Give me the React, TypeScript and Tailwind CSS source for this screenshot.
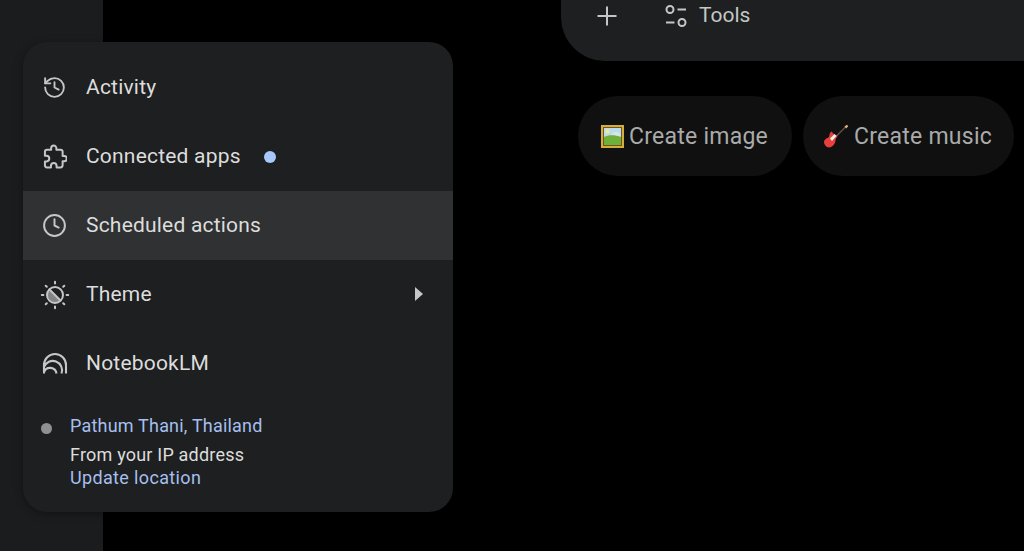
import { Clock, History, Plus } from 'lucide-react'
import type { ReactNode } from 'react'

const font = "font-['Roboto','Noto_Sans',sans-serif]"

function PuzzleIcon() {
  return (
    <svg width="25" height="25" viewBox="-0.8 -0.5 24 24" fill="none" stroke="currentColor" strokeWidth="1.9" strokeLinejoin="round">
      <path d="M20.500 11H19V7c0-1.100-.9-2-2-2h-4V3.500a2.500 2.500 0 0 0-5 0V5H4c-1.100 0-2 .9-2 2v3.800h1.500c1.500 0 2.700 1.200 2.700 2.700S5 16.200 3.500 16.200H2V20c0 1.100.9 2 2 2h3.800v-1.500c0-1.500 1.200-2.700 2.700-2.700s2.700 1.200 2.700 2.700V22H17c1.100 0 2-.9 2-2v-4h1.500a2.500 2.500 0 0 0 0-5z" />
    </svg>
  )
}

function ThemeIcon() {
  return (
    <svg width="30" height="30" viewBox="0 0 30 30" fill="none" stroke="currentColor" strokeWidth="2" strokeLinecap="round">
      <circle cx="15" cy="15" r="8" />
      <path d="M9.500 9.500A7.800 7.800 0 0 0 20.500 20.500z" fill="currentColor" stroke="none" opacity="0.6" />
      <path d="M9.500 9.500l11 11" />
      <path d="M15 1.800v1.600M15 26.600v1.600M1.800 15h1.600M26.600 15h1.600M5.700 5.700l1.100 1.100M23.200 23.200l1.100 1.100M5.700 24.300l1.100-1.100M23.200 6.800l1.100-1.100" />
    </svg>
  )
}

function NotebookIcon() {
  return (
    <svg width="26" height="26" viewBox="0 0 26 26" fill="none" stroke="currentColor" strokeWidth="2.1">
      <path d="M2 22.500V14a11 11 0 0 1 22 0v8.500" />
      <path d="M2 16A9 9 0 0 1 19.500 22.500" />
      <path d="M2 21A6.500 6.500 0 0 1 14.500 22.500" />
    </svg>
  )
}

function ToolsIcon() {
  return (
    <svg width="26" height="26" viewBox="0 0 26 26" fill="none" stroke="currentColor" strokeWidth="2">
      <circle cx="7" cy="6.500" r="3.500" />
      <circle cx="19" cy="19.500" r="3.500" />
      <path d="M14.500 6.500H23M3 19.500h8.500" />
    </svg>
  )
}

function PictureEmoji() {
  return (
    <svg width="23" height="23" viewBox="0 0 23 23" className="shrink-0">
      <rect width="23" height="23" fill="#d6ad3c" />
      <rect x="2" y="2" width="19" height="19" fill="#6b5520" />
      <rect x="3" y="3" width="17" height="17" fill="#b9dcec" />
      <circle cx="6.500" cy="6.500" r="2.300" fill="#f3e7a0" />
      <path d="M10 11l2-4h6l2 4z" fill="#d5e4e4" />
      <path d="M3 12c5-2.500 11-2 17 0v8H3z" fill="#6fb03a" />
    </svg>
  )
}

function GuitarEmoji() {
  return (
    <svg width="25" height="25" viewBox="0 0 25 25" className="shrink-0">
      <path d="M12 12.500L21.500 3" stroke="#5f5048" strokeWidth="1.600" />
      <path d="M20.500 2.500L23 0.800l1.200 1.400-2 2.300z" fill="#e2b27c" />
      <path d="M8 7.500c.6 2 2.500 3.500 5.500 4-.3 2-1.800 2.400-2 4.500 0 3.500-3 7.500-6.500 7.500-2.500 0-5-3-5-5.500 0-2.200 2-3.300 3.500-4 1.500-.6 2-1.500 2-3.500.3-1.500 1.500-2.800 2.500-3z" fill="#e5403c" />
      <path d="M6 14.500l4.500-4.500 2 2-4.500 5z" fill="#ececec" />
    </svg>
  )
}

function MenuRow({ icon, label, active, children }: { icon: ReactNode; label: string; active?: boolean; children?: ReactNode }) {
  return (
    <div className={`flex h-[69px] items-center text-[#dcdddc] ${active ? 'bg-[#303132]' : ''}`}>
      <div className="flex w-[63px] shrink-0 items-center justify-center text-[#c4c7c5]">{icon}</div>
      <span className="text-[21px] tracking-[0.2px]">{label}</span>
      {children}
    </div>
  )
}

function Chip({ icon, label, className }: { icon: ReactNode; label: string; className: string }) {
  return (
    <div className={`flex h-20 items-center gap-[5px] rounded-[40px] bg-[#101010] text-[23px] tracking-[0.25px] text-[#a9abaa] ${className}`}>
      {icon}
      <span className="pt-[2px]">{label}</span>
    </div>
  )
}

export default function App() {
  return (
    <div className={`relative flex h-[551px] w-[1024px] overflow-hidden bg-black ${font}`}>
      {/* Sidebar behind the menu */}
      <div className="h-full w-[103px] shrink-0 bg-[#1b1c1d]" />

      {/* Main column */}
      <div className="ml-[458px] flex min-w-0 flex-1 flex-col">
        <div className="flex h-[61px] shrink-0 items-start rounded-bl-[44px] bg-[#1e1f20] pl-[31px] pt-[1px] text-[#c4c7c5]">
          <Plus size={30} strokeWidth={1.6} />
          <div className="ml-[41px] flex h-[30px] items-center gap-[10px]">
            <ToolsIcon />
            <span className="text-[21px]">Tools</span>
          </div>
        </div>
        <div className="-mr-4 ml-[17px] mt-[35px] flex gap-[11px]">
          <Chip icon={<PictureEmoji />} label="Create image" className="w-[214px] shrink-0 pl-[23px]" />
          <Chip icon={<GuitarEmoji />} label="Create music" className="w-[211px] shrink-0 pl-[21px]" />
        </div>
      </div>

      {/* Open settings menu */}
      <div className="absolute left-[23px] top-[42px] flex h-[470px] w-[430px] flex-col overflow-hidden rounded-[24px] bg-[#1e1f20] pt-[11px] shadow-[0_2px_8px_rgba(0,0,0,0.35)]">
        <MenuRow icon={<History size={25} strokeWidth={1.8} />} label="Activity" />
        <MenuRow icon={<PuzzleIcon />} label="Connected apps">
          <span className="ml-[23px] h-3 w-3 rounded-full bg-[#a8c7fa]" />
        </MenuRow>
        <MenuRow icon={<Clock size={25} strokeWidth={1.9} />} label="Scheduled actions" active />
        <MenuRow icon={<ThemeIcon />} label="Theme">
          <svg width="10" height="16" viewBox="0 0 10 16" className="ml-auto mr-[29px] mb-[1px] text-[#c4c7c5]" fill="currentColor">
            <path d="M1 1l8 7-8 7z" />
          </svg>
        </MenuRow>
        <MenuRow icon={<NotebookIcon />} label="NotebookLM" />

        <div className="mt-4 flex pl-[18px] text-[18px] leading-[23px] tracking-[0.2px]">
          <span className="mt-[9px] h-[11px] w-[11px] shrink-0 rounded-full bg-[#8e918f]" />
          <div className="ml-[18px]">
            <div className="mb-[6px] text-[#a6bfee]">Pathum Thani, Thailand</div>
            <div className="text-[#dcdddc]">From your IP address</div>
            <div className="tracking-[0.35px] text-[#a6bfee]">Update location</div>
          </div>
        </div>
      </div>
    </div>
  )
}
